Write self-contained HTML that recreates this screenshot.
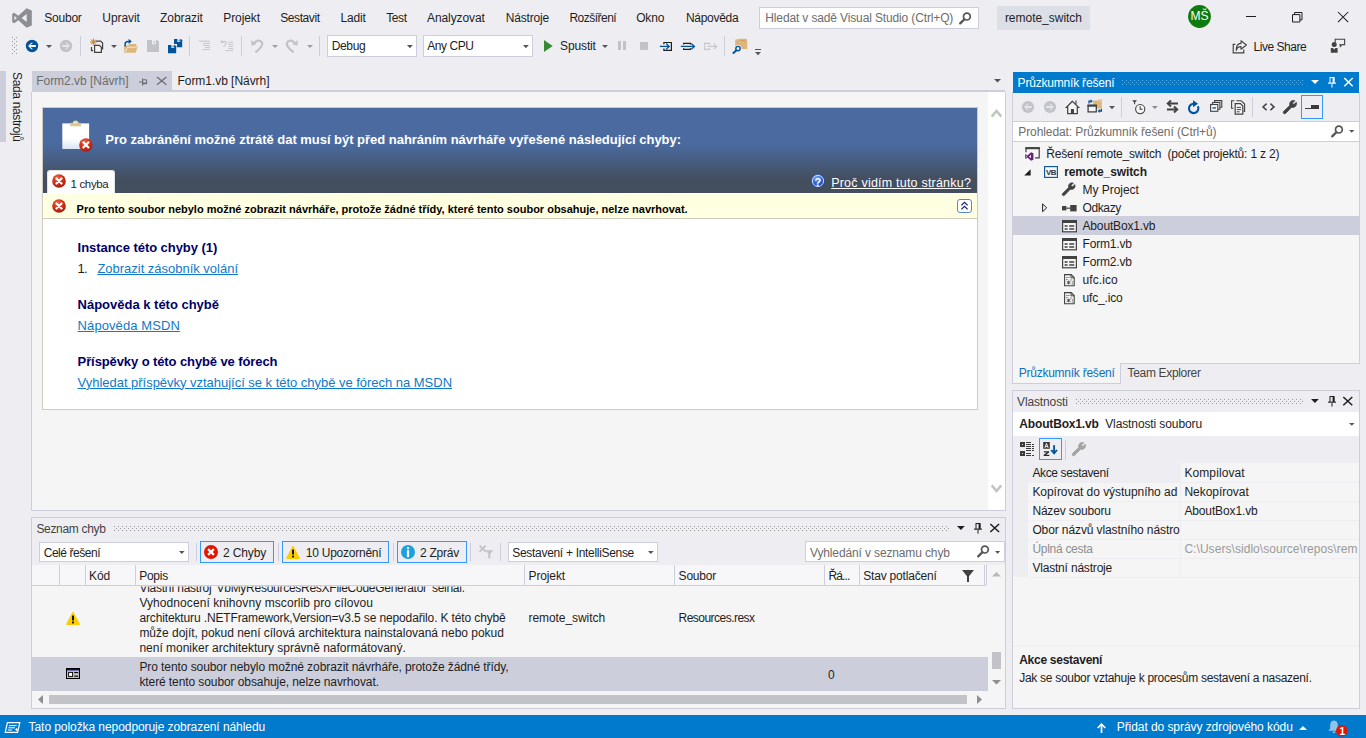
<!DOCTYPE html><html><head><meta charset="utf-8"><title>remote_switch - Microsoft Visual Studio</title><style>
html,body{margin:0;padding:0;}body{width:1366px;height:738px;overflow:hidden;position:relative;background:#EEEEF2;font-family:"Liberation Sans",sans-serif;font-size:12px;color:#1E1E1E;}
div,svg,span.t{position:absolute;}span.t{white-space:pre;line-height:16px;height:16px;}svg{overflow:visible;}
</style></head><body>
<div style="left:0px;top:71px;width:6px;height:71px;background:#CCCEDB;"></div>
<div style="left:32px;top:71px;width:140px;height:20px;background:#CCCEDB;"></div>
<div style="left:32px;top:90px;width:973px;height:2px;background:#CCCEDB;"></div>
<div style="left:31px;top:92px;width:975px;height:419px;background:#F5F5F5;box-sizing:border-box;border-left:1px solid #CCCEDB;border-right:1px solid #CCCEDB;border-bottom:1px solid #CCCEDB;"></div>
<div style="left:988px;top:92px;width:17px;height:418px;background:#FFFFFF;"></div>
<div style="left:42px;top:107px;width:936px;height:303px;background:#FFFFFF;box-sizing:border-box;border:1px solid #CFCBBF;"></div>
<div style="left:43px;top:108px;width:934px;height:85px;background:linear-gradient(to bottom,#4A6AA0 0px,#4A6AA0 36px,#434E5E 72px,#434E5E 85px);"></div>
<div style="left:43px;top:193px;width:934px;height:26px;background:#FFFFE1;box-sizing:border-box;border-bottom:1px solid #D0CEBF;"></div>
<div style="left:47px;top:170px;width:68px;height:23px;background:#FFFFFF;border-radius:3px 3px 0 0;box-sizing:border-box;border:1px solid #E4E4E4;border-bottom:none;"></div>
<div style="left:31px;top:517px;width:975px;height:192px;background:#EEEEF2;box-sizing:border-box;border:1px solid #CCCEDB;"></div>
<div style="left:32px;top:565px;width:973px;height:143px;background:#F5F5F5;"></div>
<div style="left:32px;top:565px;width:954px;height:20px;background:#F7F7F9;"></div>
<div style="left:32px;top:585px;width:954px;height:1px;background:#CCCEDB;"></div>
<div style="left:59px;top:565px;width:1px;height:20px;background:#CCCEDB;"></div>
<div style="left:85px;top:565px;width:1px;height:20px;background:#CCCEDB;"></div>
<div style="left:135px;top:565px;width:1px;height:20px;background:#CCCEDB;"></div>
<div style="left:524px;top:565px;width:1px;height:20px;background:#CCCEDB;"></div>
<div style="left:674px;top:565px;width:1px;height:20px;background:#CCCEDB;"></div>
<div style="left:824px;top:565px;width:1px;height:20px;background:#CCCEDB;"></div>
<div style="left:859px;top:565px;width:1px;height:20px;background:#CCCEDB;"></div>
<div style="left:984px;top:565px;width:1px;height:20px;background:#CCCEDB;"></div>
<div style="left:986px;top:565px;width:1px;height:20px;background:#CCCEDB;"></div>
<div style="left:32px;top:657px;width:956px;height:34px;background:#CCCEDB;"></div>
<div style="left:49px;top:695px;width:918px;height:9px;background:#C2C3C9;"></div>
<div style="left:992px;top:652px;width:9px;height:17px;background:#C2C3C9;"></div>
<div style="left:39px;top:542px;width:150px;height:20px;background:#FFFFFF;box-sizing:border-box;border:1px solid #CCCEDB;"></div>
<div style="left:196px;top:543px;width:1px;height:18px;background:#CCCEDB;"></div>
<div style="left:278px;top:543px;width:1px;height:18px;background:#CCCEDB;"></div>
<div style="left:393px;top:543px;width:1px;height:18px;background:#CCCEDB;"></div>
<div style="left:470px;top:543px;width:1px;height:18px;background:#CCCEDB;"></div>
<div style="left:500px;top:543px;width:1px;height:18px;background:#CCCEDB;"></div>
<div style="left:200px;top:541px;width:74px;height:22px;background:#EEEEF2;box-sizing:border-box;border:1px solid #3399FF;"></div>
<div style="left:282px;top:541px;width:107px;height:22px;background:#EEEEF2;box-sizing:border-box;border:1px solid #3399FF;"></div>
<div style="left:397px;top:541px;width:70px;height:22px;background:#EEEEF2;box-sizing:border-box;border:1px solid #3399FF;"></div>
<div style="left:508px;top:542px;width:150px;height:20px;background:#FFFFFF;box-sizing:border-box;border:1px solid #CCCEDB;"></div>
<div style="left:805px;top:541px;width:200px;height:21px;background:#FFFFFF;box-sizing:border-box;border:1px solid #CCCEDB;"></div>
<div style="left:1012px;top:92px;width:348px;height:292px;background:#F5F5F5;box-sizing:border-box;border:1px solid #CCCEDB;"></div>
<div style="left:1013px;top:72px;width:346px;height:21px;background:#007ACC;"></div>
<div style="left:1013px;top:93px;width:346px;height:28px;background:#EEEEF2;"></div>
<div style="left:1013px;top:121px;width:346px;height:21px;background:#FFFFFF;box-sizing:border-box;border:1px solid #CCCEDB;border-left:none;border-right:none;"></div>
<div style="left:1013px;top:216px;width:346px;height:19px;background:#CCCEDB;"></div>
<div style="left:1121px;top:364px;width:239px;height:21px;background:#EEEEF2;"></div>
<div style="left:1121px;top:363px;width:239px;height:1px;background:#CCCEDB;"></div>
<div style="left:1120px;top:363px;width:1px;height:21px;background:#CCCEDB;"></div>
<div style="left:1301px;top:95px;width:22px;height:24px;background:#EEEEF2;box-sizing:border-box;border:1px solid #3399FF;"></div>
<div style="left:1121px;top:97px;width:1px;height:20px;background:#CCCEDB;"></div>
<div style="left:1252px;top:97px;width:1px;height:20px;background:#CCCEDB;"></div>
<div style="left:1012px;top:390px;width:348px;height:319px;background:#F5F5F5;box-sizing:border-box;border:1px solid #CCCEDB;"></div>
<div style="left:1013px;top:391px;width:346px;height:21px;background:#EEEEF2;"></div>
<div style="left:1013px;top:412px;width:346px;height:24px;background:#FFFFFF;"></div>
<div style="left:1013px;top:436px;width:346px;height:27px;background:#EEEEF2;"></div>
<div style="left:1013px;top:463px;width:15px;height:114px;background:#EEEEF2;"></div>
<div style="left:1028px;top:463px;width:152px;height:19px;background:#EEEEF2;"></div>
<div style="left:1028px;top:482px;width:331px;height:1px;background:#EEEEF2;"></div>
<div style="left:1028px;top:501px;width:331px;height:1px;background:#EEEEF2;"></div>
<div style="left:1028px;top:520px;width:331px;height:1px;background:#EEEEF2;"></div>
<div style="left:1028px;top:539px;width:331px;height:1px;background:#EEEEF2;"></div>
<div style="left:1028px;top:558px;width:331px;height:1px;background:#EEEEF2;"></div>
<div style="left:1028px;top:577px;width:331px;height:1px;background:#EEEEF2;"></div>
<div style="left:1180px;top:463px;width:1px;height:114px;background:#EEEEF2;"></div>
<div style="left:1013px;top:645px;width:346px;height:1px;background:#EEEEF2;"></div>
<div style="left:1039px;top:438px;width:23px;height:22px;background:#EEEEF2;box-sizing:border-box;border:1px solid #3399FF;"></div>
<div style="left:1065px;top:440px;width:1px;height:20px;background:#CCCEDB;"></div>
<div style="left:0px;top:715px;width:1366px;height:23px;background:#007ACC;"></div>
<div style="left:759px;top:7px;width:220px;height:22px;background:#FFFFFF;box-sizing:border-box;border:1px solid #CCCEDB;"></div>
<div style="left:997px;top:6px;width:93px;height:24px;background:#DDDFE7;"></div>
<div style="left:327px;top:35px;width:90px;height:22px;background:#FFFFFF;box-sizing:border-box;border:1px solid #CCCEDB;"></div>
<div style="left:423px;top:35px;width:110px;height:22px;background:#FFFFFF;box-sizing:border-box;border:1px solid #CCCEDB;"></div>
<div style="left:80px;top:36px;width:1px;height:20px;background:#CCCEDB;"></div>
<div style="left:189px;top:36px;width:1px;height:20px;background:#CCCEDB;"></div>
<div style="left:241px;top:36px;width:1px;height:20px;background:#CCCEDB;"></div>
<div style="left:319px;top:36px;width:1px;height:20px;background:#CCCEDB;"></div>
<div style="left:724px;top:36px;width:1px;height:20px;background:#CCCEDB;"></div>
<svg style="left:12px;top:8px;" width="20" height="20" viewBox="0 0 20 20"><path fill-rule="evenodd" fill="#8D8D95" d="M14.6 .2L19.8 2.4V17.6L14.6 19.8 6.3 12.2 2.3 15.2 .2 14.2V5.8L2.3 4.8 6.3 7.8ZM14.7 6.1L9.6 10 14.7 13.9ZM2.4 7.7V12.3L4.9 10Z"/></svg>
<svg style="left:12px;top:37px;" width="5" height="17" viewBox="0 0 5 17"><g fill="#999999"><rect x="0" y="0" width="1" height="1"/><rect x="4" y="0" width="1" height="1"/><rect x="2" y="2" width="1" height="1"/><rect x="0" y="4" width="1" height="1"/><rect x="4" y="4" width="1" height="1"/><rect x="2" y="6" width="1" height="1"/><rect x="0" y="8" width="1" height="1"/><rect x="4" y="8" width="1" height="1"/><rect x="2" y="10" width="1" height="1"/><rect x="0" y="12" width="1" height="1"/><rect x="4" y="12" width="1" height="1"/><rect x="2" y="14" width="1" height="1"/><rect x="0" y="16" width="1" height="1"/><rect x="4" y="16" width="1" height="1"/></g></svg>
<svg style="left:25.1px;top:38.9px;" width="14" height="14" viewBox="0 0 14 14"><circle cx="7" cy="7" r="6.2" fill="#00539C"/><path d="M-3.9 0L-.6 -3.2H1L-1.5 -.95H3.8V.95H-1.5L1 3.2H-.6Z" fill="#fff" transform="translate(7,7)"/></svg>
<svg style="left:46px;top:45px;" width="6" height="3" viewBox="0 0 6 3"><path d="M0 0H6L3.0 3Z" fill="#555555"/></svg>
<svg style="left:58.900000000000006px;top:38.9px;" width="14" height="14" viewBox="0 0 14 14"><circle cx="7" cy="7" r="6.2" fill="#C2C3C9"/><path d="M-3.9 0L-.6 -3.2H1L-1.5 -.95H3.8V.95H-1.5L1 3.2H-.6Z" fill="#E4E4EA" transform="translate(7,7) scale(-1,1)"/></svg>
<svg style="left:89px;top:38px;" width="16" height="16" viewBox="0 0 16 16"><g fill="none" stroke="#424242" stroke-width="1.2"><path d="M6.6 3.1H11.6L13.6 5.1V11.5"/><path d="M2.5 9V12.6H4.2"/><path d="M5.6 7.3H10.4L12.4 9.3V14.4H5.6Z" fill="#F5F5F5"/></g><g stroke="#C27D1A" stroke-width=".95"><path d="M4.4 .6V7.4M1 4H7.8M2 1.6L6.8 6.4M6.8 1.6L2 6.4"/></g></svg>
<svg style="left:111px;top:45px;" width="6" height="3" viewBox="0 0 6 3"><path d="M0 0H6L3.0 3Z" fill="#555555"/></svg>
<svg style="left:123px;top:38px;" width="16" height="16" viewBox="0 0 16 16"><path d="M1.2 14.8V7.6H5.2L6.4 6H13.2V8.2H14.8L12.6 14.8Z" fill="#DCB67A"/><path d="M2.4 14L4.4 9.2H13.6" fill="none" stroke="#EEEEF2" stroke-width=".9"/><path d="M2.1 8.6V6.2Q2.1 3.4 5 3.4H6.2" fill="none" stroke="#00539C" stroke-width="1.5"/><path d="M5.6 .8L8.8 3.4 5.6 6Z" fill="#00539C"/></svg>
<svg style="left:147px;top:40px;" width="12" height="12" viewBox="0 0 12 12"><path d="M0 0H10.4L12 1.6V12H0Z" fill="#C2C3C9"/><rect x="5" y="0" width="3.8" height="4.3" fill="#EEEEF2"/><rect x="6.6" y="1" width="1.2" height="2.4" fill="#C2C3C9"/></svg>
<svg style="left:174px;top:38.9px;" width="8.2" height="8.2" viewBox="0 0 8.2 8.2"><path d="M0 0H6.999999999999999L8.2 1.2V8.2H0Z" fill="#00539C"/><rect x="3.4" y="0" width="2.8" height="3" fill="#EEEEF2"/><rect x="4.7" y=".7" width=".9" height="1.7" fill="#00539C"/></svg>
<svg style="left:166.8px;top:43.8px;" width="10" height="10" viewBox="0 0 10 10"><rect width="10" height="10" fill="#EEEEF2"/></svg>
<svg style="left:167.9px;top:44.8px;" width="8.2" height="8.2" viewBox="0 0 8.2 8.2"><path d="M0 0H6.999999999999999L8.2 1.2V8.2H0Z" fill="#00539C"/><rect x="3.4" y="0" width="2.8" height="3" fill="#EEEEF2"/><rect x="4.7" y=".7" width=".9" height="1.7" fill="#00539C"/></svg>
<svg style="left:199px;top:40px;" width="12" height="11" viewBox="0 0 12 11"><g fill="#C6C7CC"><rect x="1" y=".6" width="10" height="1"/><rect x="0" y=".3" width="1.2" height="1"/><rect x="4" y="2.8" width="7" height="1"/><rect x="4" y="4.9" width="7" height="1"/><rect x="6" y="7" width="5" height="1"/><rect x="3" y="9.1" width="8" height="1"/></g></svg>
<svg style="left:220px;top:39px;" width="14" height="13" viewBox="0 0 14 13"><g fill="#C6C7CC"><rect x="8.3" y="2.7" width="4.9" height="1"/><rect x="8.3" y="4.8" width="4.9" height="1"/><rect x="8.3" y="6.9" width="4.9" height="1"/><rect x="8.3" y="9" width="4.9" height="1"/><rect x="4.9" y="11.1" width="8.3" height="1"/></g><path d="M2 3.6Q4.5 1.4 6 3.3 6.8 5 3.6 7.6" fill="none" stroke="#C6C7CC" stroke-width="1.1"/><path d="M.9 .8L1.1 4.3 4.3 3.3Z" fill="#C6C7CC"/></svg>
<svg style="left:250.6px;top:38.8px;" width="13" height="14" viewBox="0 0 13 14"><path d="M2.8 4.4Q7.2 -.4 10.6 3 13.2 6.8 4.4 13.2" fill="none" stroke="#C2C3C9" stroke-width="2.3"/><path d="M.2 .9L.5 6.8 5.6 5.4Z" fill="#C2C3C9"/></svg>
<svg style="left:272px;top:45px;" width="6" height="3" viewBox="0 0 6 3"><path d="M0 0H6L3.0 3Z" fill="#9C9F9C"/></svg>
<svg style="left:285.4px;top:38.8px;" width="13" height="14" viewBox="0 0 13 14"><g transform="translate(13,0) scale(-1,1)"><path d="M2.8 4.4Q7.2 -.4 10.6 3 13.2 6.8 4.4 13.2" fill="none" stroke="#C2C3C9" stroke-width="2.3"/><path d="M.2 .9L.5 6.8 5.6 5.4Z" fill="#C2C3C9"/></g></svg>
<svg style="left:307px;top:45px;" width="6" height="3" viewBox="0 0 6 3"><path d="M0 0H6L3.0 3Z" fill="#9C9F9C"/></svg>
<svg style="left:407.3px;top:44.7px;" width="5.8" height="3.2" viewBox="0 0 5.8 3.2"><path d="M0 0H5.8L2.9 3.2Z" fill="#555555"/></svg>
<svg style="left:523px;top:44.7px;" width="5.8" height="3.2" viewBox="0 0 5.8 3.2"><path d="M0 0H5.8L2.9 3.2Z" fill="#555555"/></svg>
<svg style="left:543.6px;top:40px;" width="9" height="12" viewBox="0 0 9 12"><path d="M0 0L8.7 6 0 12Z" fill="#388A34"/></svg>
<svg style="left:602px;top:45px;" width="6" height="3" viewBox="0 0 6 3"><path d="M0 0H6L3.0 3Z" fill="#555555"/></svg>
<div style="left:618px;top:41px;width:3px;height:9px;background:#C2C3C9;"></div>
<div style="left:623px;top:41px;width:3px;height:9px;background:#C2C3C9;"></div>
<div style="left:640px;top:42px;width:8px;height:8px;background:#C2C3C9;"></div>
<svg style="left:659px;top:41px;" width="14" height="11" viewBox="0 0 14 11"><path d="M4.9 3.2V1.5H12.4V9.3H4.9V7.6" fill="none" stroke="#1E1E1E" stroke-width="1.2"/><path d="M.8 5.4H10" stroke="#00539C" stroke-width="1.3"/><path d="M7.2 2.6L10.2 5.4 7.2 8.2" fill="none" stroke="#00539C" stroke-width="1.3"/></svg>
<svg style="left:680px;top:41px;" width="16" height="11" viewBox="0 0 16 11"><path d="M3.6 3.6V2.4H10.4V3.6M3.6 7.2V8.4H10.4V7.2" fill="none" stroke="#1E1E1E" stroke-width="1.2"/><path d="M.8 5.4H14.2" stroke="#00539C" stroke-width="1.3"/><path d="M11.4 2.6L14.4 5.4 11.4 8.2" fill="none" stroke="#00539C" stroke-width="1.3"/></svg>
<svg style="left:703px;top:41px;" width="15" height="11" viewBox="0 0 15 11"><path d="M6.6 3.8V2.4H1.6V8.4H6.6V7" fill="none" stroke="#C6C7CC" stroke-width="1.1"/><path d="M4.4 5.4H13.4" stroke="#C6C7CC" stroke-width="1.2"/><path d="M10.8 2.8L13.6 5.4 10.8 8" fill="none" stroke="#C6C7CC" stroke-width="1.2"/></svg>
<svg style="left:732px;top:38px;" width="16" height="16" viewBox="0 0 16 16"><path d="M3.2 2.6Q3.2 1.6 4.2 1.6L8 .8H14.4Q15.2 .8 15.2 1.6V11H3.2Z" fill="#DCB67A"/><path d="M8.4 2.6H13.6" stroke="#C9A05F" stroke-width=".8"/><circle cx="6" cy="10.6" r="3.6" fill="#EEEEF2"/><circle cx="6" cy="10.6" r="2.2" fill="#F5F5F5" stroke="#00539C" stroke-width="1.4"/><path d="M4.4 12.2L1.4 15" stroke="#00539C" stroke-width="1.9" stroke-linecap="round"/></svg>
<div style="left:755px;top:49px;width:6px;height:1px;background:#555555;"></div>
<svg style="left:755px;top:51.6px;" width="6" height="3.2" viewBox="0 0 6 3.2"><path d="M0 0H6L3.0 3.2Z" fill="#555555"/></svg>
<svg style="left:1232.4px;top:39.6px;" width="16" height="14" viewBox="0 0 16 14"><path d="M3.4 4.4H1.2V12.8H11.8V9.6" fill="none" stroke="#424242" stroke-width="1.15"/><path d="M9 .8L14.4 5 9 9.2V6.6Q5.2 6.6 4.2 10.4 4.2 3.6 9 3.4Z" fill="#EEEEF2" stroke="#424242" stroke-width="1.1" stroke-linejoin="round"/></svg>
<svg style="left:1330px;top:38px;" width="16" height="16" viewBox="0 0 16 16"><path d="M5.2 4.6V1.2H14.6V6.6H12.2L10.4 8.4V6.6H9.4" fill="none" stroke="#424242" stroke-width="1.1"/><circle cx="4.2" cy="6.6" r="2.5" fill="#424242"/><path d="M.8 14.8V10H3L4.2 11.4 5.4 10H7.6V14.8Z" fill="#424242"/></svg>
<svg style="left:1246px;top:16px;" width="10" height="1" viewBox="0 0 10 1"><rect width="10" height="1" fill="#1E1E1E"/></svg>
<svg style="left:1292px;top:11.5px;" width="10.5" height="10.5" viewBox="0 0 10.5 10.5"><path d="M.5 2.6H7.9V10H.5ZM2.6 2.6V.5H10V7.9H7.9" fill="none" stroke="#1E1E1E" stroke-width="1"/></svg>
<svg style="left:1338.2px;top:11.6px;" width="10.2" height="10.2" viewBox="0 0 10.2 10.2"><path d="M0 0L10.2 10.2M10.2 0L0 10.2" stroke="#1E1E1E" stroke-width="1.05"/></svg>
<svg style="left:1187.8px;top:4.5px;" width="23" height="23" viewBox="0 0 23 23"><circle cx="11.5" cy="11.5" r="11.4" fill="#0F7B0F"/></svg>
<svg style="left:958.6px;top:11.6px;" width="12.5" height="12.5" viewBox="0 0 12.5 12.5"><g transform="scale(1.0)"><circle cx="7.9" cy="4.6" r="3.4" fill="none" stroke="#555555" stroke-width="1.7"/><path d="M5.4 7.2L1.2 11.4" stroke="#555555" stroke-width="2.3" stroke-linecap="round"/></g></svg>
<svg style="left:139px;top:77.5px;" width="9" height="8" viewBox="0 0 9 8"><path d="M0 4H3.4" stroke="#6D6D70" stroke-width="1"/><path d="M3.6 .4V7.4" stroke="#6D6D70" stroke-width="1.2"/><path d="M4.2 1.8H7.6V5.4H4.2" fill="none" stroke="#6D6D70" stroke-width="1"/><rect x="4" y="4.6" width="4.1" height="1.6" fill="#6D6D70"/></svg>
<svg style="left:157.3px;top:77.2px;" width="9.4" height="7.8" viewBox="0 0 9.4 7.8"><path d="M0 0L9.4 7.8M9.4 0L0 7.8" stroke="#6D6D70" stroke-width="1.25"/></svg>
<svg style="left:994px;top:79.4px;" width="7" height="3.6" viewBox="0 0 7 3.6"><path d="M0 0H7L3.5 3.6Z" fill="#555555"/></svg>
<svg style="left:991px;top:109px;" width="11" height="9" viewBox="0 0 11 9"><path d="M.7 7.6L5.5 2 10.3 7.6" fill="none" stroke="#BFC7BF" stroke-width="2.6"/></svg>
<svg style="left:991px;top:484px;" width="11" height="9" viewBox="0 0 11 9"><path d="M.7 1.4L5.5 7 10.3 1.4" fill="none" stroke="#BFC7BF" stroke-width="2.6"/></svg>
<svg width="0" height="0" style="left:0;top:0"><defs><radialGradient id="rg" cx=".4" cy=".3" r=".75"><stop offset="0" stop-color="#F0694F"/><stop offset=".45" stop-color="#D6361C"/><stop offset="1" stop-color="#9E1A0C"/></radialGradient><radialGradient id="bg" cx=".4" cy=".3" r=".75"><stop offset="0" stop-color="#6FA8F5"/><stop offset=".5" stop-color="#2A63D0"/><stop offset="1" stop-color="#173F9A"/></radialGradient></defs></svg>
<svg style="left:62px;top:120px;" width="28" height="30" viewBox="0 0 28 30"><defs><linearGradient id="pg" x1="0" y1="0" x2="0" y2="1"><stop offset="0" stop-color="#FFFFFF"/><stop offset=".6" stop-color="#FFFFFF"/><stop offset="1" stop-color="#DCE4F2"/></linearGradient></defs><rect x=".3" y="3.4" width="26.8" height="25.6" fill="url(#pg)"/><path d="M8.2 6.2V3.8Q8.2 2.8 9.4 2.8H10.6Q11 .4 13.6 .4 16.2 .4 16.6 2.8H17.8Q19 2.8 19 3.8V6.2Z" fill="#D9C98F"/><rect x="11.6" y="1.6" width="4" height="1.6" rx=".8" fill="#F3EBC8"/></svg>
<svg style="left:79.1px;top:138.0px;" width="13.8" height="13.8" viewBox="0 0 13.8 13.8"><circle cx="6.9" cy="6.9" r="6.7" fill="url(#rg)"/><path d="M4.300000000000001 4.300000000000001L9.5 9.5M9.5 4.300000000000001L4.300000000000001 9.5" stroke="#fff" stroke-width="2.1" stroke-linecap="round"/></svg>
<svg style="left:51.8px;top:173.9px;" width="14" height="14" viewBox="0 0 14 14"><circle cx="7" cy="7" r="6.8" fill="url(#rg)"/><path d="M4.4 4.4L9.6 9.6M9.6 4.4L4.4 9.6" stroke="#fff" stroke-width="2.1" stroke-linecap="round"/></svg>
<svg style="left:51.8px;top:199.3px;" width="14" height="14" viewBox="0 0 14 14"><circle cx="7" cy="7" r="6.8" fill="url(#rg)"/><path d="M4.4 4.4L9.6 9.6M9.6 4.4L4.4 9.6" stroke="#fff" stroke-width="2.1" stroke-linecap="round"/></svg>
<svg style="left:810.8px;top:174.2px;" width="14" height="14" viewBox="0 0 14 14"><circle cx="7" cy="7" r="6.8" fill="url(#bg)"/><circle cx="7" cy="7" r="5.6" fill="none" stroke="#DCE8FF" stroke-width=".9"/></svg>
<svg style="left:957px;top:199px;" width="15" height="14" viewBox="0 0 15 14"><rect x=".5" y=".5" width="14" height="13" rx="2.5" fill="#FFFFFF" stroke="#5A87D6" stroke-width="1"/><path d="M4.4 6.4L7.5 3.4 10.6 6.4M4.4 10.4L7.5 7.4 10.6 10.4" fill="none" stroke="#15246E" stroke-width="1.3"/></svg>
<svg style="left:203.9px;top:545.1px;" width="14" height="14" viewBox="0 0 14 14"><circle cx="7" cy="7" r="7" fill="#E51400"/><path d="M4.1 4.1L9.9 9.9M9.9 4.1L4.1 9.9" stroke="#fff" stroke-width="2.2"/></svg>
<svg style="left:286.1px;top:545px;" width="14" height="14" viewBox="0 0 14 14"><path d="M7.0 .3L13.9 13.1Q14 14 13 14H1Q0 14 .1 13.1Z" fill="#FFCC00"/><rect x="6.1" y="4.6" width="1.8" height="4.9" fill="#000"/><rect x="6.1" y="10.6" width="1.8" height="1.8" fill="#000"/></svg>
<svg style="left:401.1px;top:545.1px;" width="14" height="14" viewBox="0 0 14 14"><circle cx="7" cy="7" r="7" fill="#1BA1E2"/><rect x="5.9" y="2.2" width="2.2" height="2" fill="#fff"/><rect x="5.9" y="5.2" width="2.2" height="6.9" fill="#fff"/></svg>
<svg style="left:66px;top:611px;" width="14" height="14" viewBox="0 0 14 14"><path d="M7.0 .3L13.9 13.1Q14 14 13 14H1Q0 14 .1 13.1Z" fill="#FFCC00"/><rect x="6.1" y="4.6" width="1.8" height="4.9" fill="#000"/><rect x="6.1" y="10.6" width="1.8" height="1.8" fill="#000"/></svg>
<svg style="left:478.6px;top:545.4px;" width="15" height="14" viewBox="0 0 15 14"><path d="M.6 .6L6.6 6.6M6.6 .6L.6 6.6" stroke="#C2C3C9" stroke-width="1.8"/><path d="M6.2 5.2H14.4L11.3 8.8V13.2H9.3V8.8Z" fill="#C2C3C9"/></svg>
<svg style="left:179.4px;top:550.6px;" width="5.6" height="3" viewBox="0 0 5.6 3"><path d="M0 0H5.6L2.8 3Z" fill="#555555"/></svg>
<svg style="left:648px;top:550.6px;" width="5.6" height="3" viewBox="0 0 5.6 3"><path d="M0 0H5.6L2.8 3Z" fill="#555555"/></svg>
<svg style="left:977.2px;top:545px;" width="12.5" height="12.5" viewBox="0 0 12.5 12.5"><g transform="scale(1.0)"><circle cx="7.9" cy="4.6" r="3.4" fill="none" stroke="#555555" stroke-width="1.7"/><path d="M5.4 7.2L1.2 11.4" stroke="#555555" stroke-width="2.3" stroke-linecap="round"/></g></svg>
<svg style="left:995.4px;top:550.6px;" width="5.2" height="2.8" viewBox="0 0 5.2 2.8"><path d="M0 0H5.2L2.6 2.8Z" fill="#555555"/></svg>
<svg style="left:114px;top:526px;" width="836" height="5" viewBox="0 0 836 5"><defs><pattern id="gp1" width="4" height="4" patternUnits="userSpaceOnUse"><rect x="0" y="0" width="1" height="1" fill="#999999"/><rect x="2" y="2" width="1" height="1" fill="#999999"/></pattern></defs><rect width="836" height="5" fill="url(#gp1)"/></svg>
<svg style="left:957px;top:526px;" width="7.8" height="4" viewBox="0 0 7.8 4"><path d="M0 0H7.8L3.9 4Z" fill="#1E1E1E"/></svg>
<svg style="left:973.6px;top:523.4px;" width="8" height="10.6" viewBox="0 0 8 10.6"><path d="M2 .5H6V5.6" fill="none" stroke="#1E1E1E" stroke-width="1"/><rect x="1.5" y="0" width="1" height="6" fill="#1E1E1E"/><rect x="4.6" y="0" width="1.8" height="6" fill="#1E1E1E"/><rect x="0" y="5.6" width="8" height="1.1" fill="#1E1E1E"/><rect x="3.5" y="6.6" width="1" height="4" fill="#1E1E1E"/></svg>
<svg style="left:989.6px;top:524.2px;" width="9.4" height="8" viewBox="0 0 9.4 8"><path d="M.3 0L9.1 8M9.1 0L.3 8" stroke="#1E1E1E" stroke-width="1.5"/></svg>
<svg style="left:962.2px;top:569.6px;" width="12" height="12" viewBox="0 0 12 12"><path d="M0 0H12L7 6.2V12H5V6.2Z" fill="#424242"/></svg>
<svg style="left:992px;top:572.4px;" width="9" height="4.6" viewBox="0 0 9 4.6"><path d="M0 4.6L4.5 0 9 4.6Z" fill="#B8B9C0"/></svg>
<svg style="left:992px;top:680.2px;" width="9" height="4.6" viewBox="0 0 9 4.6"><path d="M0 0L4.5 4.6 9 0Z" fill="#8E8F96"/></svg>
<svg style="left:38.2px;top:695.2px;" width="5" height="9" viewBox="0 0 5 9"><path d="M5 0L0 4.5 5 9Z" fill="#8E8F96"/></svg>
<svg style="left:976.8px;top:695.2px;" width="5" height="9" viewBox="0 0 5 9"><path d="M0 0L5 4.5 0 9Z" fill="#8E8F96"/></svg>
<svg style="left:66px;top:668px;" width="14" height="11" viewBox="0 0 14 11"><rect x=".5" y=".5" width="13" height="10" fill="#C0C0C0" stroke="#000" stroke-width="1"/><rect x="1" y="1" width="12" height="1.4" fill="#0000A8"/><rect x="2.6" y="4.4" width="4" height="4" fill="#fff" stroke="#000" stroke-width=".9"/><rect x="8.2" y="4" width="4" height="1.1" fill="#000"/><rect x="8.2" y="7.6" width="4" height="1.1" fill="#000"/></svg>
<svg style="left:4px;top:722px;" width="17" height="11" viewBox="0 0 17 11"><path d="M3.4 .6H15.8L13.6 10.4H1.2Z" fill="none" stroke="#fff" stroke-width="1.2"/><path d="M5 3.6H12.6M4.4 5.8H11M3.8 8H8" stroke="#fff" stroke-width="1"/><path d="M12.6 6V9M11.1 7.5H14.1" stroke="#fff" stroke-width=".9"/></svg>
<svg style="left:1097.4px;top:722.8px;" width="9" height="10" viewBox="0 0 9 10"><path d="M4.5 1V10" stroke="#fff" stroke-width="1.7"/><path d="M.7 5L4.5 1.1 8.3 5" fill="none" stroke="#fff" stroke-width="1.7"/></svg>
<svg style="left:1299.4px;top:725.6px;" width="8" height="4" viewBox="0 0 8 4"><path d="M0 4L4 0 8 4Z" fill="#fff"/></svg>
<svg style="left:1328px;top:719.6px;" width="12" height="14" viewBox="0 0 12 14"><path d="M6 .4Q9.8 .8 9.8 5V8.6L11.6 10.8H.4L2.2 8.6V5Q2.2 .8 6 .4Z" fill="#8CC4EA"/><path d="M4.4 11.6H7.6Q7.4 13.2 6 13.2 4.6 13.2 4.4 11.6Z" fill="#8CC4EA"/></svg>
<svg style="left:1336.2px;top:725.3px;" width="11.6" height="11.6" viewBox="0 0 11.6 11.6"><circle cx="5.8" cy="5.8" r="5.8" fill="#E51400"/></svg>
<svg style="left:1122px;top:80px;" width="182" height="5" viewBox="0 0 182 5"><defs><pattern id="gp2" width="4" height="4" patternUnits="userSpaceOnUse"><rect x="0" y="0" width="1" height="1" fill="#5AAEE6"/><rect x="2" y="2" width="1" height="1" fill="#5AAEE6"/></pattern></defs><rect width="182" height="5" fill="url(#gp2)"/></svg>
<svg style="left:1311px;top:80px;" width="8" height="4" viewBox="0 0 8 4"><path d="M0 0H8L4.0 4Z" fill="#FFFFFF"/></svg>
<svg style="left:1328.2px;top:77.4px;" width="8" height="10.6" viewBox="0 0 8 10.6"><path d="M2 .5H6V5.6" fill="none" stroke="#FFFFFF" stroke-width="1"/><rect x="1.5" y="0" width="1" height="6" fill="#FFFFFF"/><rect x="4.6" y="0" width="1.8" height="6" fill="#FFFFFF"/><rect x="0" y="5.6" width="8" height="1.1" fill="#FFFFFF"/><rect x="3.5" y="6.6" width="1" height="4" fill="#FFFFFF"/></svg>
<svg style="left:1343.8px;top:78.2px;" width="9" height="8.2" viewBox="0 0 9 8.2"><path d="M.3 0L8.7 8.2M8.7 0L.3 8.2" stroke="#FFFFFF" stroke-width="1.5"/></svg>
<svg style="left:1020.9000000000001px;top:99.9px;" width="14" height="14" viewBox="0 0 14 14"><circle cx="7" cy="7" r="6.1" fill="#C2C3C9"/><path d="M-3.9 0L-.6 -3.2H1L-1.5 -.95H3.8V.95H-1.5L1 3.2H-.6Z" fill="#E4E4EA" transform="translate(7,7)"/></svg>
<svg style="left:1043px;top:99.9px;" width="14" height="14" viewBox="0 0 14 14"><circle cx="7" cy="7" r="6.1" fill="#C2C3C9"/><path d="M-3.9 0L-.6 -3.2H1L-1.5 -.95H3.8V.95H-1.5L1 3.2H-.6Z" fill="#E4E4EA" transform="translate(7,7) scale(-1,1)"/></svg>
<svg style="left:1064.6px;top:99.6px;" width="15" height="15" viewBox="0 0 15 15"><path d="M7.4 1.3L1.4 7.4H2.7V13.6H12.3V7.4H13.6Z" fill="#F5F5F5" stroke="#424242" stroke-width="1.25" stroke-linejoin="miter"/><path d="M11 4.4V.5" stroke="#424242" stroke-width="1.1"/><rect x="5.9" y="9" width="3.1" height="4.6" fill="#424242"/></svg>
<svg style="left:1087.4px;top:99.4px;" width="16" height="14" viewBox="0 0 16 14"><path d="M6.2 1.6H10.6L11.6 .6H14.8V9.6H6.2Z" fill="#DCB67A"/><path d="M11.8 2.2H14" stroke="#F0DDB8" stroke-width=".9"/><rect x="1.1" y="6.3" width="8.2" height="6.6" fill="#F5F5F5" stroke="#424242" stroke-width="1.3"/><rect x=".5" y="5.7" width="9.4" height="2" fill="#424242"/><path d="M2 4.4V2.2H4.2" fill="none" stroke="#00539C" stroke-width="1.3"/><path d="M3.6 .2L5.8 2.2 3.6 4.2Z" fill="#00539C"/><path d="M14.4 9.8V12H12.2" fill="none" stroke="#00539C" stroke-width="1.3"/><path d="M12.8 10L10.6 12 12.8 14Z" fill="#00539C"/></svg>
<svg style="left:1109px;top:106px;" width="6" height="3.2" viewBox="0 0 6 3.2"><path d="M0 0H6L3.0 3.2Z" fill="#555555"/></svg>
<svg style="left:1132px;top:99.6px;" width="14" height="15" viewBox="0 0 14 15"><path d="M.2 .3H5L3.1 2.6V4.2H2.1V2.6Z" fill="#424242"/><circle cx="8.2" cy="9.1" r="4.6" fill="#F5F5F5" stroke="#424242" stroke-width="1.1"/><path d="M8.2 6.2V9.3H10.6" fill="none" stroke="#424242" stroke-width="1.1"/></svg>
<svg style="left:1152.3px;top:106px;" width="5.8" height="3" viewBox="0 0 5.8 3"><path d="M0 0H5.8L2.9 3Z" fill="#8A8A8A"/></svg>
<svg style="left:1165.6px;top:100.4px;" width="13" height="13" viewBox="0 0 13 13"><path d="M2.4 3.4H12M1 9.4H10.6" stroke="#424242" stroke-width="2"/><path d="M5 .4L1.8 3.4 5 6.4M8 6.4L11.2 9.4 8 12.4" fill="none" stroke="#424242" stroke-width="2"/></svg>
<svg style="left:1187px;top:100.2px;" width="14" height="14" viewBox="0 0 14 14"><path d="M10.9 6.3A4.7 4.7 0 1 1 6.2 3.7" fill="none" stroke="#00539C" stroke-width="2.1"/><path d="M6 .2L11 3.7 6 7.2Z" fill="#00539C"/></svg>
<svg style="left:1210.4px;top:100.4px;" width="12.4" height="12" viewBox="0 0 12.4 12"><path d="M4.6 2.4V.6H11.8V7.2H10M2.6 4.4V2.5H9.9V9.2H8" fill="none" stroke="#424242" stroke-width="1.1"/><rect x=".6" y="4.5" width="7.2" height="6.8" fill="#F5F5F5" stroke="#424242" stroke-width="1.1"/><rect x="2.4" y="7.3" width="3.6" height="1.3" fill="#00539C"/></svg>
<svg style="left:1230.6px;top:99.6px;" width="15" height="15" viewBox="0 0 15 15"><path d="M3.4 .7H.6V8.2H2.4M5.4 .7H10.2L13.6 4.1V11.4H12.6" fill="none" stroke="#424242" stroke-width="1.1"/><path d="M4.2 3.6H9.4L11.8 6V14.2H4.2Z" fill="#F5F5F5" stroke="#424242" stroke-width="1.2"/><path d="M5.8 7.4H10M5.8 9.6H10M5.8 11.8H8.6" stroke="#424242" stroke-width="1"/></svg>
<svg style="left:1261.6px;top:103.2px;" width="13" height="8" viewBox="0 0 13 8"><path d="M4.6 .6L1 3.9 4.6 7.2M8.4 .6L12 3.9 8.4 7.2" fill="none" stroke="#424242" stroke-width="1.5"/></svg>
<svg style="left:1282px;top:99.4px;" width="16" height="16" viewBox="0 0 16 16"><path d="M14.3 3.2Q15.2 5.6 13.4 7.4 11.8 8.8 9.6 8.2L3.6 14.4Q2.6 15.2 1.6 14.4 .8 13.4 1.6 12.4L7.8 6.4Q7.2 4.2 8.6 2.6 10.4 .8 12.8 1.7L10.4 4.1 11.9 5.6Z" fill="#424242" stroke="#424242" stroke-width=".8" stroke-linejoin="round"/></svg>
<div style="left:1305px;top:108px;width:14px;height:1px;background:#3A3A3A;"></div>
<div style="left:1311px;top:105px;width:8px;height:3px;background:#3A3A3A;"></div>
<svg style="left:1331.4px;top:125px;" width="12.5" height="12.5" viewBox="0 0 12.5 12.5"><g transform="scale(1.0)"><circle cx="7.9" cy="4.6" r="3.4" fill="none" stroke="#555555" stroke-width="1.7"/><path d="M5.4 7.2L1.2 11.4" stroke="#555555" stroke-width="2.3" stroke-linecap="round"/></g></svg>
<svg style="left:1349.2px;top:130px;" width="5.4" height="2.8" viewBox="0 0 5.4 2.8"><path d="M0 0H5.4L2.7 2.8Z" fill="#555555"/></svg>
<svg style="left:1023.6px;top:169px;" width="7" height="7" viewBox="0 0 7 7"><path d="M6.6 .2V6.6H.2Z" fill="#1E1E1E"/></svg>
<svg style="left:1041.8px;top:202.6px;" width="5.4" height="9.6" viewBox="0 0 5.4 9.6"><path d="M.6 .9L4.7 4.8 .6 8.7Z" fill="none" stroke="#1E1E1E" stroke-width="1"/></svg>
<svg style="left:1025.4px;top:146.6px;" width="15" height="14" viewBox="0 0 15 14"><path d="M1 5.2V.8H14.2V10.8H10" fill="none" stroke="#424242" stroke-width="1.2"/><rect x=".4" y=".2" width="14.4" height="2" fill="#424242"/><path fill-rule="evenodd" fill="#68217A" d="M6 5.2L8.4 6.2V12.8L6 13.8 2.5 10.6 1 11.8 .2 11.4V7.6L1 7.2 2.5 8.4ZM6 7.8L4 9.5 6 11.2ZM1.1 8.5V10.5L2.1 9.5Z"/></svg>
<svg style="left:1043.8px;top:166.2px;" width="14" height="12" viewBox="0 0 14 12"><rect x=".6" y=".6" width="12.8" height="10.8" fill="#F5F5F5" stroke="#00539C" stroke-width="1.1"/></svg>
<svg style="left:1061.4px;top:182.4px;" width="16" height="16" viewBox="0 0 16 16"><path d="M14.3 3.2Q15.2 5.6 13.4 7.4 11.8 8.8 9.6 8.2L3.6 14.4Q2.6 15.2 1.6 14.4 .8 13.4 1.6 12.4L7.8 6.4Q7.2 4.2 8.6 2.6 10.4 .8 12.8 1.7L10.4 4.1 11.9 5.6Z" fill="#424242" stroke="#424242" stroke-width=".7" stroke-linejoin="round" transform="translate(0,-.6) scale(.97)"/></svg>
<svg style="left:1061.8px;top:204.8px;" width="15" height="6.4" viewBox="0 0 15 6.4"><rect x="0" y="1" width="4.4" height="4.4" fill="#424242"/><rect x="4.4" y="2.6" width="3.8" height="1.2" fill="#424242"/><rect x="8.2" y="0" width="6.4" height="6.4" fill="#424242"/></svg>
<svg style="left:1061.5px;top:220px;" width="15" height="12.4" viewBox="0 0 15 12.4"><rect x=".6" y=".6" width="13.8" height="11.2" fill="#F5F5F5" stroke="#424242" stroke-width="1.2"/><rect x=".6" y=".6" width="13.8" height="2.4" fill="#424242"/><path d="M2.6 6H5.6M7.2 6H12.2M2.6 9H5.6M7.2 9H12.2" stroke="#424242" stroke-width="1.5"/></svg>
<svg style="left:1061.5px;top:238px;" width="15" height="12.4" viewBox="0 0 15 12.4"><rect x=".6" y=".6" width="13.8" height="11.2" fill="#F5F5F5" stroke="#424242" stroke-width="1.2"/><rect x=".6" y=".6" width="13.8" height="2.4" fill="#424242"/><path d="M2.6 6H5.6M7.2 6H12.2M2.6 9H5.6M7.2 9H12.2" stroke="#424242" stroke-width="1.5"/></svg>
<svg style="left:1061.5px;top:256px;" width="15" height="12.4" viewBox="0 0 15 12.4"><rect x=".6" y=".6" width="13.8" height="11.2" fill="#F5F5F5" stroke="#424242" stroke-width="1.2"/><rect x=".6" y=".6" width="13.8" height="2.4" fill="#424242"/><path d="M2.6 6H5.6M7.2 6H12.2M2.6 9H5.6M7.2 9H12.2" stroke="#424242" stroke-width="1.5"/></svg>
<svg style="left:1063.6px;top:273.8px;" width="11" height="12.4" viewBox="0 0 11 12.4"><path d="M.6 .6H7.2L10.2 3.6V11.8H.6Z" fill="#F5F5F5" stroke="#424242" stroke-width="1.1"/><path d="M7 .8V3.8H10" fill="none" stroke="#424242" stroke-width="1"/><g fill="#424242"><rect x="2.4" y="3" width="1" height="1"/><rect x="4.4" y="3" width="1" height="1"/><rect x="2.4" y="5" width="1" height="1"/><rect x="6.4" y="5.4" width="1" height="1"/><rect x="7.8" y="7.4" width="1" height="1"/><rect x="7.8" y="9.4" width="1" height="1"/></g><path d="M4.6 6.6V10.4M2.8 7.4L6.4 9.6M6.4 7.4L2.8 9.6" stroke="#424242" stroke-width=".9"/></svg>
<svg style="left:1063.6px;top:291.8px;" width="11" height="12.4" viewBox="0 0 11 12.4"><path d="M.6 .6H7.2L10.2 3.6V11.8H.6Z" fill="#F5F5F5" stroke="#424242" stroke-width="1.1"/><path d="M7 .8V3.8H10" fill="none" stroke="#424242" stroke-width="1"/><g fill="#424242"><rect x="2.4" y="3" width="1" height="1"/><rect x="4.4" y="3" width="1" height="1"/><rect x="2.4" y="5" width="1" height="1"/><rect x="6.4" y="5.4" width="1" height="1"/><rect x="7.8" y="7.4" width="1" height="1"/><rect x="7.8" y="9.4" width="1" height="1"/></g><path d="M4.6 6.6V10.4M2.8 7.4L6.4 9.6M6.4 7.4L2.8 9.6" stroke="#424242" stroke-width=".9"/></svg>
<svg style="left:1076px;top:399px;" width="228" height="5" viewBox="0 0 228 5"><defs><pattern id="gp3" width="4" height="4" patternUnits="userSpaceOnUse"><rect x="0" y="0" width="1" height="1" fill="#999999"/><rect x="2" y="2" width="1" height="1" fill="#999999"/></pattern></defs><rect width="228" height="5" fill="url(#gp3)"/></svg>
<svg style="left:1311.2px;top:399.4px;" width="7.8" height="4" viewBox="0 0 7.8 4"><path d="M0 0H7.8L3.9 4Z" fill="#1E1E1E"/></svg>
<svg style="left:1327.6px;top:396px;" width="8" height="10.6" viewBox="0 0 8 10.6"><path d="M2 .5H6V5.6" fill="none" stroke="#1E1E1E" stroke-width="1"/><rect x="1.5" y="0" width="1" height="6" fill="#1E1E1E"/><rect x="4.6" y="0" width="1.8" height="6" fill="#1E1E1E"/><rect x="0" y="5.6" width="8" height="1.1" fill="#1E1E1E"/><rect x="3.5" y="6.6" width="1" height="4" fill="#1E1E1E"/></svg>
<svg style="left:1343px;top:397.4px;" width="9.6" height="8.2" viewBox="0 0 9.6 8.2"><path d="M.3 0L9.299999999999999 8.2M9.299999999999999 0L.3 8.2" stroke="#1E1E1E" stroke-width="1.5"/></svg>
<svg style="left:1349.4px;top:423.2px;" width="5.6" height="2.8" viewBox="0 0 5.6 2.8"><path d="M0 0H5.6L2.8 2.8Z" fill="#555555"/></svg>
<svg style="left:1020px;top:442px;" width="15" height="15" viewBox="0 0 15 15"><g fill="#3A3A3A"><rect x="0" y="0" width="5" height="5"/><rect x="0" y="9" width="5" height="5"/><rect x="6" y="0" width="5" height="1"/><rect x="6" y="2" width="5" height="1"/><rect x="6" y="4" width="5" height="1"/><rect x="6" y="6" width="5" height="1"/><rect x="6" y="8" width="5" height="1"/><rect x="6" y="11" width="5" height="1"/><rect x="6" y="13" width="5" height="1"/><rect x="12" y="2" width="2" height="1"/><rect x="12" y="4" width="2" height="1"/><rect x="12" y="6" width="2" height="1"/><rect x="12" y="8" width="2" height="1"/><rect x="12" y="13" width="2" height="1"/></g><rect x="2" y="2" width="1" height="1" fill="#EEEEF2"/><rect x="2" y="11" width="1" height="1" fill="#EEEEF2"/></svg>
<svg style="left:1043px;top:442px;" width="15" height="15" viewBox="0 0 15 15"><rect x=".2" y="0" width="6.6" height="6.8" fill="#3A3A3A"/><path d="M1.9 5.8L3.5 1.4 5.1 5.8M2.5 4.4H4.5" fill="none" stroke="#EEEEF2" stroke-width="1"/><path d="M.9 9.2H6.1V10.4L2.9 12.7H6.3V14H.7V12.8L3.9 10.5H.9Z" fill="#2A2A2A"/><path d="M11.1 3.2V10.8" stroke="#00539C" stroke-width="1.9"/><path d="M8.2 8L11.1 11.4 14 8" fill="none" stroke="#00539C" stroke-width="1.9"/></svg>
<svg style="left:1071px;top:441px;" width="16" height="16" viewBox="0 0 16 16"><path d="M14.3 3.2Q15.2 5.6 13.4 7.4 11.8 8.8 9.6 8.2L3.6 14.4Q2.6 15.2 1.6 14.4 .8 13.4 1.6 12.4L7.8 6.4Q7.2 4.2 8.6 2.6 10.4 .8 12.8 1.7L10.4 4.1 11.9 5.6Z" fill="#A2A5A2" stroke="#A2A5A2" stroke-width=".9" stroke-linejoin="round"/></svg>
<span class="t" id="t0" style="left:44.30px;top:10.00px;font-size:12px;color:#1E1E1E;letter-spacing:-0.234px;">Soubor</span>
<span class="t" id="t1" style="left:102.30px;top:10.00px;font-size:12px;color:#1E1E1E;letter-spacing:-0.059px;">Upravit</span>
<span class="t" id="t2" style="left:160.00px;top:10.00px;font-size:12px;color:#1E1E1E;letter-spacing:-0.057px;">Zobrazit</span>
<span class="t" id="t3" style="left:223.30px;top:10.00px;font-size:12px;color:#1E1E1E;letter-spacing:-0.108px;">Projekt</span>
<span class="t" id="t4" style="left:280.20px;top:10.00px;font-size:12px;color:#1E1E1E;letter-spacing:-0.411px;">Sestavit</span>
<span class="t" id="t5" style="left:340.50px;top:10.00px;font-size:12px;color:#1E1E1E;letter-spacing:-0.146px;">Ladit</span>
<span class="t" id="t6" style="left:386.20px;top:10.00px;font-size:12px;color:#1E1E1E;letter-spacing:-0.379px;">Test</span>
<span class="t" id="t7" style="left:427.00px;top:10.00px;font-size:12px;color:#1E1E1E;letter-spacing:-0.090px;">Analyzovat</span>
<span class="t" id="t8" style="left:505.70px;top:10.00px;font-size:12px;color:#1E1E1E;letter-spacing:-0.173px;">Nástroje</span>
<span class="t" id="t9" style="left:569.40px;top:10.00px;font-size:12px;color:#1E1E1E;letter-spacing:-0.507px;">Rozšíření</span>
<span class="t" id="t10" style="left:636.20px;top:10.00px;font-size:12px;color:#1E1E1E;letter-spacing:-0.147px;">Okno</span>
<span class="t" id="t11" style="left:685.90px;top:10.00px;font-size:12px;color:#1E1E1E;letter-spacing:-0.277px;">Nápověda</span>
<span class="t" id="t12" style="left:765.30px;top:10.00px;font-size:12px;color:#6D6D6D;letter-spacing:-0.138px;">Hledat v sadě Visual Studio (Ctrl+Q)</span>
<span class="t" id="t13" style="left:1004.90px;top:10.00px;font-size:12px;color:#1E1E1E;letter-spacing:-0.021px;">remote_switch</span>
<span class="t" id="t14" style="left:1190.50px;top:8.00px;font-size:12px;color:#FFFFFF;letter-spacing:-0.100px;">MŠ</span>
<span class="t" id="t15" style="left:331.70px;top:38.00px;font-size:12px;color:#1E1E1E;letter-spacing:-0.355px;">Debug</span>
<span class="t" id="t16" style="left:427.30px;top:38.00px;font-size:12px;color:#1E1E1E;letter-spacing:-0.451px;">Any CPU</span>
<span class="t" id="t17" style="left:560.10px;top:38.00px;font-size:12px;color:#1E1E1E;letter-spacing:-0.141px;">Spustit</span>
<span class="t" id="t18" style="left:1253.50px;top:39.00px;font-size:12px;color:#1E1E1E;letter-spacing:-0.478px;">Live Share</span>
<span class="t" id="t19" style="left:36.20px;top:73.00px;font-size:12px;color:#6D6D6D;letter-spacing:-0.025px;">Form2.vb [Návrh]</span>
<span class="t" id="t20" style="left:177.50px;top:73.00px;font-size:12px;color:#1E1E1E;letter-spacing:-0.044px;">Form1.vb [Návrh]</span>
<span class="t" id="t21" style="left:0.00px;top:-12.00px;font-size:12px;color:#1E1E1E;letter-spacing:-0.343px;left:24.6px;top:71.7px;transform-origin:0 0;transform:rotate(90deg);">Sada nástrojů</span>
<span class="t" id="t22" style="left:105.30px;top:131.50px;font-size:13px;color:#FFFFFF;font-weight:700;letter-spacing:-0.025px;">Pro zabránění možné ztrátě dat musí být před nahráním návrháře vyřešené následující chyby:</span>
<span class="t" id="t23" style="left:70.60px;top:176.00px;font-size:11.5px;color:#1E1E1E;letter-spacing:-0.354px;">1 chyba</span>
<span class="t" id="t24" style="left:831.20px;top:175.00px;font-size:12.5px;color:#FFFFFF;letter-spacing:0.213px;text-decoration:underline;">Proč vidím tuto stránku?</span>
<span class="t" id="t25" style="left:76.60px;top:201.00px;font-size:11px;color:#000000;font-weight:700;letter-spacing:-0.005px;">Pro tento soubor nebylo možné zobrazit návrháře, protože žádné třídy, které tento soubor obsahuje, nelze navrhovat.</span>
<span class="t" id="t26" style="left:77.60px;top:239.50px;font-size:13px;color:#000066;font-weight:700;letter-spacing:-0.055px;">Instance této chyby (1)</span>
<span class="t" id="t27" style="left:77.60px;top:260.50px;font-size:13px;color:#1E1E1E;letter-spacing:-0.822px;">1.</span>
<span class="t" id="t28" style="left:97.40px;top:260.50px;font-size:13px;color:#0E7AC9;letter-spacing:-0.013px;text-decoration:underline;">Zobrazit zásobník volání</span>
<span class="t" id="t29" style="left:77.60px;top:296.50px;font-size:13px;color:#000066;font-weight:700;letter-spacing:-0.010px;">Nápověda k této chybě</span>
<span class="t" id="t30" style="left:77.60px;top:317.50px;font-size:13px;color:#0E7AC9;letter-spacing:0.088px;text-decoration:underline;">Nápověda MSDN</span>
<span class="t" id="t31" style="left:77.60px;top:353.50px;font-size:13px;color:#000066;font-weight:700;letter-spacing:-0.101px;">Příspěvky o této chybě ve fórech</span>
<span class="t" id="t32" style="left:77.60px;top:374.50px;font-size:13px;color:#0E7AC9;letter-spacing:-0.025px;text-decoration:underline;">Vyhledat příspěvky vztahující se k této chybě ve fórech na MSDN</span>
<span class="t" id="t33" style="left:36.40px;top:521.00px;font-size:12px;color:#444444;letter-spacing:-0.318px;">Seznam chyb</span>
<span class="t" id="t34" style="left:43.70px;top:545.00px;font-size:12px;color:#1E1E1E;letter-spacing:-0.452px;">Celé řešení</span>
<span class="t" id="t35" style="left:223.10px;top:545.00px;font-size:12px;color:#1E1E1E;letter-spacing:-0.162px;">2 Chyby</span>
<span class="t" id="t36" style="left:305.80px;top:545.00px;font-size:12px;color:#1E1E1E;letter-spacing:-0.241px;">10 Upozornění</span>
<span class="t" id="t37" style="left:420.00px;top:545.00px;font-size:12px;color:#1E1E1E;letter-spacing:-0.255px;">2 Zpráv</span>
<span class="t" id="t38" style="left:512.30px;top:545.00px;font-size:12px;color:#1E1E1E;letter-spacing:-0.308px;">Sestavení + IntelliSense</span>
<span class="t" id="t39" style="left:810.00px;top:545.00px;font-size:12px;color:#6D6D6D;letter-spacing:-0.132px;">Vyhledání v seznamu chyb</span>
<span class="t" id="t40" style="left:89.10px;top:568.00px;font-size:12px;color:#1E1E1E;letter-spacing:-0.153px;">Kód</span>
<span class="t" id="t41" style="left:139.20px;top:568.00px;font-size:12px;color:#1E1E1E;letter-spacing:-0.246px;">Popis</span>
<span class="t" id="t42" style="left:528.50px;top:568.00px;font-size:12px;color:#1E1E1E;letter-spacing:-0.123px;">Projekt</span>
<span class="t" id="t43" style="left:678.60px;top:568.00px;font-size:12px;color:#1E1E1E;letter-spacing:-0.217px;">Soubor</span>
<span class="t" id="t44" style="left:828.40px;top:568.00px;font-size:12px;color:#1E1E1E;letter-spacing:-0.849px;">Řá...</span>
<span class="t" id="t45" style="left:863.20px;top:568.00px;font-size:12px;color:#1E1E1E;letter-spacing:-0.190px;">Stav potlačení</span>
<span class="t" id="t46" style="left:139.40px;top:580.00px;font-size:12px;color:#1E1E1E;letter-spacing:-0.268px;clip-path:inset(6.5px 0 0 0);">Vlastní nástroj 'VbMyResourcesResXFileCodeGenerator' selhal.</span>
<span class="t" id="t47" style="left:139.40px;top:595.00px;font-size:12px;color:#1E1E1E;letter-spacing:0.079px;">Vyhodnocení knihovny mscorlib pro cílovou</span>
<span class="t" id="t48" style="left:139.40px;top:610.00px;font-size:12px;color:#1E1E1E;letter-spacing:-0.133px;">architekturu .NETFramework,Version=v3.5 se nepodařilo. K této chybě</span>
<span class="t" id="t49" style="left:139.40px;top:625.00px;font-size:12px;color:#1E1E1E;letter-spacing:-0.016px;">může dojít, pokud není cílová architektura nainstalovaná nebo pokud</span>
<span class="t" id="t50" style="left:139.40px;top:640.00px;font-size:12px;color:#1E1E1E;letter-spacing:-0.008px;">není moniker architektury správně naformátovaný.</span>
<span class="t" id="t51" style="left:528.50px;top:610.00px;font-size:12px;color:#1E1E1E;letter-spacing:-0.067px;">remote_switch</span>
<span class="t" id="t52" style="left:678.60px;top:610.00px;font-size:12px;color:#1E1E1E;letter-spacing:-0.534px;">Resources.resx</span>
<span class="t" id="t53" style="left:139.40px;top:659.00px;font-size:12px;color:#1E1E1E;letter-spacing:-0.079px;">Pro tento soubor nebylo možné zobrazit návrháře, protože žádné třídy,</span>
<span class="t" id="t54" style="left:139.40px;top:674.00px;font-size:12px;color:#1E1E1E;letter-spacing:-0.089px;">které tento soubor obsahuje, nelze navrhovat.</span>
<span class="t" id="t55" style="left:827.90px;top:667.00px;font-size:12px;color:#1E1E1E;letter-spacing:-0.487px;">0</span>
<span class="t" id="t56" style="left:28.60px;top:719.00px;font-size:12px;color:#FFFFFF;letter-spacing:-0.072px;">Tato položka nepodporuje zobrazení náhledu</span>
<span class="t" id="t57" style="left:1116.70px;top:719.00px;font-size:12px;color:#FFFFFF;letter-spacing:-0.063px;">Přidat do správy zdrojového kódu</span>
<span class="t" id="t58" style="left:1339.60px;top:723.50px;font-size:10px;color:#FFFFFF;font-weight:700;letter-spacing:-0.762px;">1</span>
<span class="t" id="t59" style="left:1017.60px;top:75.00px;font-size:12px;color:#FFFFFF;letter-spacing:-0.197px;">Průzkumník řešení</span>
<span class="t" id="t60" style="left:1018.30px;top:124.00px;font-size:12px;color:#6D6D6D;letter-spacing:-0.096px;">Prohledat: Průzkumník řešení (Ctrl+ů)</span>
<span class="t" id="t61" style="left:1046.30px;top:146.00px;font-size:12px;color:#1E1E1E;letter-spacing:-0.188px;">Řešení remote_switch  (počet projektů: 1 z 2)</span>
<span class="t" id="t62" style="left:1064.20px;top:164.00px;font-size:12px;color:#1E1E1E;font-weight:700;letter-spacing:-0.102px;">remote_switch</span>
<span class="t" id="t63" style="left:1082.50px;top:182.00px;font-size:12px;color:#1E1E1E;letter-spacing:-0.039px;">My Project</span>
<span class="t" id="t64" style="left:1082.50px;top:200.00px;font-size:12px;color:#1E1E1E;letter-spacing:-0.381px;">Odkazy</span>
<span class="t" id="t65" style="left:1082.50px;top:218.00px;font-size:12px;color:#1E1E1E;letter-spacing:-0.152px;">AboutBox1.vb</span>
<span class="t" id="t66" style="left:1082.50px;top:236.00px;font-size:12px;color:#1E1E1E;letter-spacing:-0.186px;">Form1.vb</span>
<span class="t" id="t67" style="left:1082.50px;top:254.00px;font-size:12px;color:#1E1E1E;letter-spacing:-0.186px;">Form2.vb</span>
<span class="t" id="t68" style="left:1082.50px;top:272.00px;font-size:12px;color:#1E1E1E;letter-spacing:0.087px;">ufc.ico</span>
<span class="t" id="t69" style="left:1082.50px;top:290.00px;font-size:12px;color:#1E1E1E;letter-spacing:-0.170px;">ufc_.ico</span>
<span class="t" id="t70" style="left:1018.70px;top:365.00px;font-size:12px;color:#0E70C0;letter-spacing:-0.244px;">Průzkumník řešení</span>
<span class="t" id="t71" style="left:1127.60px;top:365.00px;font-size:12px;color:#444444;letter-spacing:-0.337px;">Team Explorer</span>
<span class="t" id="t72" style="left:1017.00px;top:394.00px;font-size:12px;color:#444444;letter-spacing:-0.123px;">Vlastnosti</span>
<span class="t" id="t73" style="left:1019.30px;top:416.00px;font-size:12px;color:#1E1E1E;font-weight:700;letter-spacing:-0.162px;">AboutBox1.vb</span>
<span class="t" id="t74" style="left:1105.20px;top:416.00px;font-size:12px;color:#1E1E1E;letter-spacing:-0.107px;">Vlastnosti souboru</span>
<span class="t" id="t75" style="left:1032.40px;top:465.00px;font-size:12px;color:#1E1E1E;letter-spacing:-0.363px;">Akce sestavení</span>
<span class="t" id="t76" style="left:1184.40px;top:465.00px;font-size:12px;color:#1E1E1E;letter-spacing:0.102px;">Kompilovat</span>
<span class="t" id="t77" style="left:1032.40px;top:484.00px;font-size:12px;color:#1E1E1E;letter-spacing:-0.047px;">Kopírovat do výstupního ad</span>
<span class="t" id="t78" style="left:1184.40px;top:484.00px;font-size:12px;color:#1E1E1E;letter-spacing:-0.028px;">Nekopírovat</span>
<span class="t" id="t79" style="left:1032.40px;top:503.00px;font-size:12px;color:#1E1E1E;letter-spacing:-0.178px;">Název souboru</span>
<span class="t" id="t80" style="left:1184.40px;top:503.00px;font-size:12px;color:#1E1E1E;letter-spacing:-0.127px;">AboutBox1.vb</span>
<span class="t" id="t81" style="left:1032.40px;top:522.00px;font-size:12px;color:#1E1E1E;letter-spacing:-0.107px;">Obor názvů vlastního nástro</span>
<span class="t" id="t82" style="left:1032.40px;top:541.00px;font-size:12px;color:#8E8E8E;letter-spacing:-0.280px;">Úplná cesta</span>
<span class="t" id="t83" style="left:1184.40px;top:541.00px;font-size:12px;color:#9A9A9A;letter-spacing:0.055px;">C:\Users\sidlo\source\repos\rem</span>
<span class="t" id="t84" style="left:1032.40px;top:560.00px;font-size:12px;color:#1E1E1E;letter-spacing:-0.189px;">Vlastní nástroje</span>
<span class="t" id="t85" style="left:1019.20px;top:652.00px;font-size:12px;color:#1E1E1E;font-weight:700;letter-spacing:-0.267px;">Akce sestavení</span>
<span class="t" id="t86" style="left:1019.20px;top:670.00px;font-size:12px;color:#1E1E1E;letter-spacing:-0.285px;">Jak se soubor vztahuje k procesům sestavení a nasazení.</span>
<span class="t" id="t87" style="left:814.60px;top:174.00px;font-size:11px;color:#FFFFFF;font-weight:700;">?</span>
<span class="t" id="t88" style="left:1046.00px;top:164.50px;font-size:8px;color:#333333;font-weight:700;letter-spacing:-0.562px;">VB</span>
</body></html>
